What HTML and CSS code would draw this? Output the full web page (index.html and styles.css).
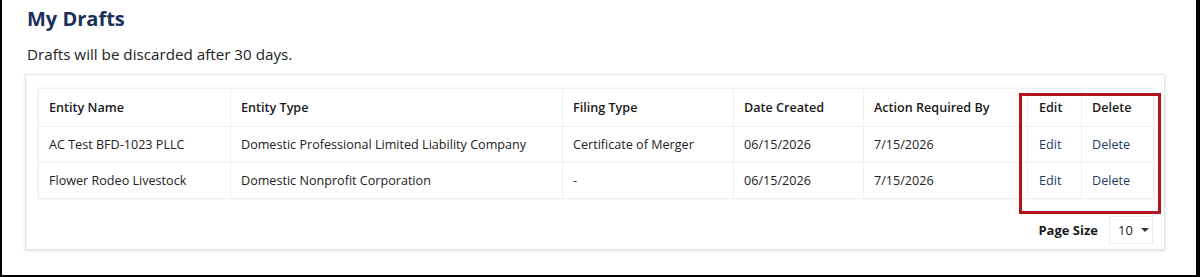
FILE: index.html
```html
<!DOCTYPE html>
<html lang="en">
<head>
<meta charset="utf-8">
<title>My Drafts</title>
<link rel="stylesheet" href="styles.css">
</head>
<body>
<div class="frame">
  <h1 class="title">My Drafts</h1>
  <p class="subtitle">Drafts will be discarded after 30 days.</p>
  <div class="card">
    <table class="grid">
      <colgroup>
        <col class="c1"><col class="c2"><col class="c3"><col class="c4"><col class="c5"><col class="c6"><col class="c7">
      </colgroup>
      <thead>
        <tr>
          <th>Entity Name</th>
          <th>Entity Type</th>
          <th>Filing Type</th>
          <th>Date Created</th>
          <th>Action Required By</th>
          <th class="act">Edit</th>
          <th>Delete</th>
        </tr>
      </thead>
      <tbody>
        <tr>
          <td>AC Test BFD-1023 PLLC</td>
          <td>Domestic Professional Limited Liability Company</td>
          <td>Certificate of Merger</td>
          <td>06/15/2026</td>
          <td>7/15/2026</td>
          <td class="act"><a class="link">Edit</a></td>
          <td><a class="link">Delete</a></td>
        </tr>
        <tr>
          <td>Flower Rodeo Livestock</td>
          <td>Domestic Nonprofit Corporation</td>
          <td>-</td>
          <td>06/15/2026</td>
          <td>7/15/2026</td>
          <td class="act"><a class="link">Edit</a></td>
          <td><a class="link">Delete</a></td>
        </tr>
      </tbody>
    </table>
    <div class="pager">
      <span class="pager-label">Page Size</span>
      <span class="select">10 <span class="caret"></span></span>
    </div>
    <div class="highlight"></div>
  </div>
</div>
</body>
</html>
```
FILE: styles.css
```css
* { box-sizing: border-box; }
html, body { margin: 0; padding: 0; background: #fff; }
body { font-family: "Open Sans", "Noto Sans", Arial, sans-serif; color: #222; }

.frame {
  width: 1200px;
  height: 277px;
  border-left: 2px solid #000;
  border-right: 4px solid #000;
  border-bottom: 2px solid #000;
  padding: 0 0 0 23px;
}

.title {
  margin: 0;
  padding: 5px 0 0 2px;
  font-size: 20px;
  line-height: 28px;
  font-weight: 700;
  color: #17325c;
}

.subtitle {
  margin: 0;
  padding: 11px 0 0 2px;
  font-size: 15.2px;
  line-height: 20px;
}

.card {
  position: relative;
  margin-top: 10px;
  width: 1140px;
  height: 176px;
  border: 1px solid #e4e4e4;
  box-shadow: 0 1px 3px rgba(0,0,0,0.12);
  padding: 13px 12px 0 12px;
}

.grid {
  border-collapse: collapse;
  table-layout: fixed;
  width: 1115px;
  font-size: 12.6px;
  box-shadow: 0 0 2px rgba(0,0,0,0.08);
}
.c1 { width: 192px; }
.c2 { width: 332px; }
.c3 { width: 171px; }
.c4 { width: 130px; }
.c5 { width: 164px; }
.c6 { width: 54px; }
.c7 { width: 72px; }

.grid th, .grid td {
  text-align: left;
  padding: 0 10px;
  border: 1px solid #f0f0f0;
  white-space: nowrap;
}
.grid th {
  height: 38px;
  font-weight: 600;
  color: #1a1a1a;
}
.grid td { height: 36px; }
.grid .act { padding-left: 11px; }

.link { color: #1d3b66; text-decoration: none; }

.pager {
  display: flex;
  justify-content: flex-end;
  align-items: center;
  gap: 11px;
  margin-top: 17px;
  width: 1115px;
  font-size: 13px;
}
.pager-label { font-weight: 700; color: #1a1a1a; }
.select {
  display: flex;
  align-items: center;
  gap: 8px;
  height: 28px;
  width: 44px;
  padding-left: 8px;
  border: 1px solid #ececec;
}
.caret {
  width: 0; height: 0;
  border-left: 4px solid transparent;
  border-right: 4px solid transparent;
  border-top: 4px solid #333;
}

.highlight {
  position: absolute;
  left: 993px;
  top: 18px;
  width: 142px;
  height: 121px;
  border: 3px solid #b3141c;
}
```
